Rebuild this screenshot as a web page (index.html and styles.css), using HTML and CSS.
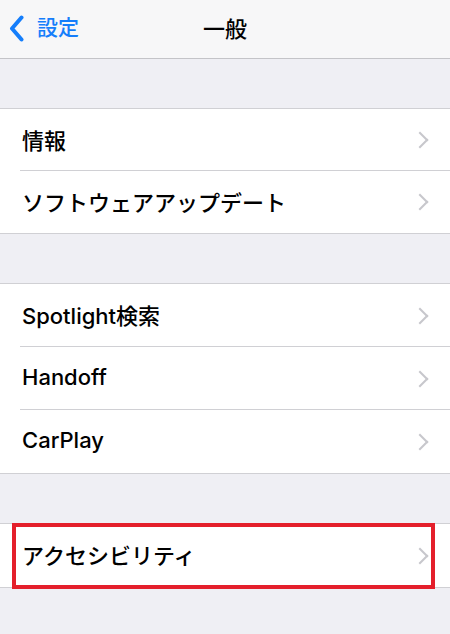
FILE: index.html
```html
<!DOCTYPE html>
<html lang="ja">
<head>
    <meta charset="UTF-8">
    <meta name="viewport" content="width=device-width, initial-scale=1.0">
    <title>一般</title>
    <link rel="stylesheet" href="styles.css">
</head>
<body>
    <header class="nav-bar">
        <a class="back-link" href="#">
            <svg class="back-icon" width="15" height="27" viewBox="0 0 15 27">
                <path d="M12.5 2.5 L3 13.5 L12.5 24.5" fill="none" stroke="#157efb" stroke-width="4" stroke-linecap="round" stroke-linejoin="round"/>
            </svg>
            <span>設定</span>
        </a>
        <h1 class="nav-title">一般</h1>
    </header>

    <ul class="group group-short">
        <li class="row"><span class="label">情報</span><span class="chevron"></span></li>
        <li class="row"><span class="label">ソフトウェアアップデート</span><span class="chevron"></span></li>
    </ul>

    <ul class="group">
        <li class="row"><span class="label">Spotlight検索</span><span class="chevron"></span></li>
        <li class="row"><span class="label">Handoff</span><span class="chevron"></span></li>
        <li class="row"><span class="label">CarPlay</span><span class="chevron"></span></li>
    </ul>

    <ul class="group highlight-group">
        <li class="row"><span class="label">アクセシビリティ</span><span class="chevron"></span></li>
        <div class="highlight-box"></div>
    </ul>
</body>
</html>
```

FILE: styles.css
```css
body {
    margin: 0;
    background-color: #efeff4;
    font-family: Inter, "Noto Sans CJK JP", "Noto Sans", sans-serif;
    color: #000000;
    height: 634px;
    overflow: hidden;
}
.nav-bar {
    position: relative;
    height: 58px;
    background-color: #f7f7f8;
    border-bottom: 1px solid #c4c4c8;
    display: flex;
    align-items: center;
    justify-content: center;
}
.back-link {
    position: absolute;
    left: 9px;
    top: 15px;
    display: flex;
    align-items: center;
    gap: 13px;
    color: #157efb;
    text-decoration: none;
    font-size: 21px;
    font-weight: 500;
    line-height: 26px;
}
.back-link span {
    margin-top: -2px;
}
.back-icon {
    display: block;
}
.nav-title {
    margin: 0 0 4px;
    font-size: 22px;
    font-weight: 500;
}
.group {
    list-style: none;
    margin: 49px 0 0;
    padding: 0;
    background-color: #ffffff;
    border-top: 1px solid #d0d0d4;
    border-bottom: 1px solid #d0d0d4;
}
.row {
    position: relative;
    height: 63px;
    display: flex;
    align-items: center;
    justify-content: space-between;
    padding: 0 22px;
    font-size: 22px;
    font-weight: 500;
}
.group-short .row {
    height: 62px;
}
.row + .row::before {
    content: "";
    position: absolute;
    left: 20px;
    right: 0;
    top: -1px;
    border-top: 1px solid #d0d0d4;
}
.label {
    margin-bottom: 3px;
}
.chevron {
    width: 10px;
    height: 10px;
    border-top: 2px solid #c7c7cc;
    border-right: 2px solid #c7c7cc;
    transform: rotate(45deg);
    margin-right: 2px;
}
.highlight-group {
    position: relative;
}
.highlight-box {
    position: absolute;
    left: 12px;
    top: -1px;
    width: 415px;
    height: 58px;
    border: 4px solid #e41f2b;
}
```
